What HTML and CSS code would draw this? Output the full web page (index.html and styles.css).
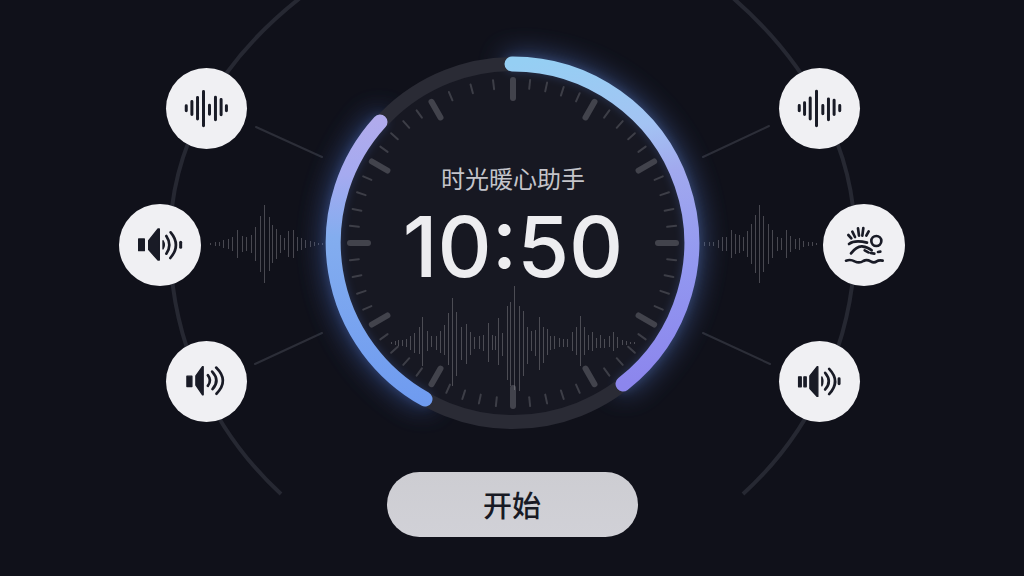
FILE: index.html
```html
<!DOCTYPE html>
<html lang="zh-CN">
<head>
    <meta charset="UTF-8">
    <meta name="viewport" content="width=device-width, initial-scale=1.0">
    <title>时光暖心助手</title>
    <link rel="stylesheet" href="styles.css">
</head>
<body>
    <main class="app">
        <!-- Orbit, spokes and side waves -->
        <svg class="backdrop" viewBox="0 0 1024 576" aria-hidden="true">
            <g class="orbit">
                <path d="M281 494A343 343 0 0 1 170 240C170 150 215 65 300 -2"/>
                <path d="M743 494A343 343 0 0 0 855 240C855 150 810 65 733 -2"/>
            </g>
            <g class="spokes">
                <path d="M256 127L322 157M255 364L322 333M769 126L703 157M770 364L703 333"/>
            </g>
            <g class="wave" id="wave-left"></g>
            <g class="wave" id="wave-right"></g>
        </svg>

        <div class="stage">
            <!-- Left sounds -->
            <div class="side side-left">
                <button class="sound" aria-label="声波">
                    <svg viewBox="-122 -122 244 244">
                        <path class="bars" d="M-61 -8V7M-44 -21V18M-27 -33V32M-9 -51V52M9 -10V17M27 -34V34M44 -27V19M60 -8V7"/>
                    </svg>
                </button>
                <button class="sound sound-outer" aria-label="音量">
                    <svg viewBox="-123 -123 246 246">
                        <path class="solid" d="M-64 -18H-47V17H-64ZM-34 -13L-6 -48H-2V45H-6L-34 14Z"/>
                        <path class="solid" d="M9 -13Q17 0 9 12Z"/>
                        <path class="line" d="M19 -27Q37 0 19 26M32 -38Q64 0 31 39"/>
                        <path class="bars" d="M62 -8V7"/>
                    </svg>
                </button>
                <button class="sound" aria-label="音量">
                    <svg viewBox="-122 -122 244 244">
                        <path class="solid" d="M-59 -16H-44V15H-59ZM-32 -17L-12 -45H-10V40H-12L-32 11Z"/>
                        <path class="line" d="M4 -19Q17 -3 4 13M17 -30Q42 -3 18 23M29 -42Q69 -3 30 37"/>
                    </svg>
                </button>
            </div>

            <!-- Dial -->
            <section class="dial">
                <svg class="dial-face" viewBox="-187 -187 374 374" aria-hidden="true">
                    <defs>
                        <linearGradient id="arc-right" gradientUnits="userSpaceOnUse" x1="0" y1="-180" x2="60" y2="150">
                            <stop offset="0" stop-color="#95cff3"/>
                            <stop offset="0.25" stop-color="#a3c3f3"/>
                            <stop offset="0.4" stop-color="#a1a9ee"/>
                            <stop offset="0.7" stop-color="#9297f0"/>
                            <stop offset="1" stop-color="#8c86ed"/>
                        </linearGradient>
                        <linearGradient id="arc-left" gradientUnits="userSpaceOnUse" x1="0" y1="-125" x2="0" y2="160">
                            <stop offset="0" stop-color="#b1abec"/>
                            <stop offset="0.2" stop-color="#a5aaf0"/>
                            <stop offset="0.42" stop-color="#83adef"/>
                            <stop offset="1" stop-color="#6f9bf0"/>
                        </linearGradient>
                        <filter id="glow" x="-30%" y="-30%" width="160%" height="160%">
                            <feGaussianBlur stdDeviation="14"/>
                        </filter>
                        <filter id="rim" x="-20%" y="-20%" width="140%" height="140%">
                            <feGaussianBlur stdDeviation="5"/>
                        </filter>
                        <path id="right" d="M-1 -179A179 179 0 0 1 110 141"/>
                        <path id="left" d="M-88 156A179 179 0 0 1 -133 -121"/>
                    </defs>
                    <g class="arcs arcs-glow" filter="url(#glow)">
                        <use href="#right" stroke="#5a7fd0"/>
                        <use href="#left" stroke="#4f76d0"/>
                    </g>
                    <circle class="disc" r="174"/>
                    <g class="arcs arcs-rim" filter="url(#rim)">
                        <use href="#right" stroke="#5a7fd0"/>
                        <use href="#left" stroke="#4f76d0"/>
                    </g>
                    <circle class="track" r="179"/>
                    <g class="arcs">
                        <use href="#right" stroke="url(#arc-right)"/>
                        <use href="#left" stroke="url(#arc-left)"/>
                    </g>
                    <g id="ticks"></g>
                    <g class="wave" id="wave-center"></g>
                </svg>
                <div class="dial-text">
                    <h1 class="title">时光暖心助手</h1>
                    <time class="time">10:50</time>
                </div>
            </section>

            <!-- Right sounds -->
            <div class="side side-right">
                <button class="sound" aria-label="声波">
                    <svg viewBox="-122 -122 244 244">
                        <path class="bars" d="M-61 -9V7M-45 -17V18M-28 -32V32M-9 -52V52M10 -9V16M27 -29V34M44 -25V18M61 -9V7"/>
                    </svg>
                </button>
                <button class="sound sound-outer" aria-label="海浪">
                    <svg viewBox="-123 -123 246 246">
                        <path class="line" d="M-47 -30L-38 -20M-35 -40L-27 -24M-18 -50L-15 -28M-2 -51L-5 -28M14 -41L7 -28"/>
                        <path class="line" d="M-45 -3Q-28 -16 9 -7M-39 25Q-22 3 -6 4Q12 6 23 16"/>
                        <circle class="line" cx="37" cy="-12" r="15"/>
                        <path class="line" d="M2 16L13 22M20 24L31 26M42 21L49 20"/>
                        <path class="line" d="M-54 47Q-40 42 -28 49Q-14 56 -2 48Q8 42 20 49Q30 55 38 49Q44 45 56 47"/>
                    </svg>
                </button>
                <button class="sound" aria-label="音量">
                    <svg viewBox="-122 -122 244 244">
                        <path class="solid" d="M-63 -14H-55V16H-63ZM-47 -14H-40V16H-47ZM-29 -17L-7 -45H-5V45H-7L-29 21Z"/>
                        <path class="solid" d="M7 -14Q14 0 7 13Z"/>
                        <path class="line" d="M17 -26Q39 0 17 24M29 -38Q65 0 29 38"/>
                        <path class="bars" d="M59 -8V7"/>
                    </svg>
                </button>
            </div>
        </div>

        <button class="start">开始</button>
    </main>
    <script src="script.js"></script>
</body>
</html>
```
FILE: styles.css
```css
body {
    margin: 0;
    background-color: #10111a;
    font-family: "Noto Sans CJK SC", sans-serif;
}
button {
    border: none;
    padding: 0;
    cursor: pointer;
}
.app {
    position: relative;
    box-sizing: border-box;
    min-height: 100vh;
    padding: 56px 0 32px;
    display: flex;
    flex-direction: column;
    align-items: center;
    gap: 42px;
    overflow: hidden;
}

/* Backdrop drawing, centred behind the dial */
.backdrop {
    position: absolute;
    top: 0;
    left: 50%;
    width: 1024px;
    transform: translateX(-50%);
}
.orbit {
    fill: none;
    stroke: #262832;
    stroke-width: 4;
}
.spokes {
    stroke: #2c2e38;
    stroke-width: 2;
    stroke-linecap: round;
}
.wave {
    stroke: #96969a;
    stroke-width: 1;
    stroke-opacity: 0.42;
}

.stage {
    position: relative;
    display: flex;
    align-items: center;
    gap: 79px;
}
.side {
    padding-top: 3px;
    display: flex;
    flex-direction: column;
    gap: 55px;
}
.side-left {
    width: 128px;
    align-items: flex-end;
}
.side-right {
    width: 126px;
    align-items: flex-start;
}
.sound {
    width: 81px;
    height: 81px;
    border-radius: 50%;
    background-color: #f0f0f3;
    color: #191b26;
}
.sound:hover {
    background-color: #fff;
}
.sound svg {
    display: block;
    width: 100%;
}
.sound-outer {
    width: 82px;
    height: 82px;
}
.side-left .sound-outer {
    align-self: flex-start;
}
.side-right .sound-outer {
    align-self: flex-end;
}
.bars {
    fill: none;
    stroke: currentColor;
    stroke-width: 9;
    stroke-linecap: round;
}
.line {
    fill: none;
    stroke: currentColor;
    stroke-width: 8;
    stroke-linecap: round;
}
.solid {
    fill: currentColor;
    stroke: currentColor;
    stroke-width: 4;
    stroke-linejoin: round;
}

/* Dial */
.dial {
    display: grid;
    width: 374px;
}
.dial-face,
.dial-text {
    grid-area: 1 / 1;
}
.dial-face {
    width: 100%;
    overflow: visible;
}
.disc {
    fill: #171822;
}
.track {
    fill: none;
    stroke: #2a2b35;
    stroke-width: 14;
}
.arcs {
    fill: none;
    stroke-width: 15;
    stroke-linecap: round;
}
.arcs-glow {
    opacity: 0.7;
}
.arcs-rim {
    opacity: 0.3;
}
.tick {
    stroke: #3d3e47;
    stroke-width: 2;
    stroke-linecap: round;
}
.tick-major {
    stroke: #42434c;
    stroke-width: 6;
}
.dial-text {
    position: relative;
    padding-top: 104px;
    text-align: center;
}
.title {
    margin: 0;
    font-size: 24px;
    line-height: 36px;
    font-weight: 400;
    color: #c4c4ca;
}
.time {
    display: block;
    font-family: Inter, "Liberation Sans", sans-serif;
    font-size: 84px;
    font-weight: 500;
    line-height: 102px;
    color: #ededf0;
}

.start {
    position: relative;
    width: 251px;
    height: 65px;
    padding-bottom: 2px;
    border-radius: 33px;
    background: linear-gradient(#cdcdd2, #d1d1d7);
    color: #181a24;
    font-family: inherit;
    font-size: 29px;
    font-weight: 500;
}
.start:hover {
    background: #dedee3;
}
```
FILE: script.js
```js
const SVG_NS = 'http://www.w3.org/2000/svg';

function addLine(parent, x1, y1, x2, y2, className) {
    const line = document.createElementNS(SVG_NS, 'line');
    line.setAttribute('x1', x1);
    line.setAttribute('y1', y1);
    line.setAttribute('x2', x2);
    line.setAttribute('y2', y2);
    if (className) line.setAttribute('class', className);
    parent.appendChild(line);
    return line;
}

// Dial ticks: a long one every 30 degrees, short ones between
function drawTicks() {
    const ticks = document.getElementById('ticks');
    for (let hour = 0; hour < 12; hour++) {
        const major = addLine(ticks, 0, -163, 0, -145, 'tick tick-major');
        major.setAttribute('transform', `rotate(${hour * 30})`);
        const steps = hour === 11 ? [7, 15, 23] : [6, 12, 18, 24];
        for (const step of steps) {
            const minor = addLine(ticks, 0, -164, 0, -155, 'tick');
            minor.setAttribute('transform', `rotate(${hour * 30 + step})`);
        }
    }
}

// Bars are [x, height above the axis, height below the axis]
function drawWave(id, axis, bars) {
    const wave = document.getElementById(id);
    for (const [x, up, down = up] of bars) {
        addLine(wave, x + 0.5, axis - up, x + 0.5, axis + down);
    }
}

drawTicks();

drawWave('wave-left', 244, [
    [210, 1], [215, 2], [219, 2], [223, 4], [228, 5], [232, 7], [237, 14],
    [242, 8], [246, 7], [251, 9], [255, 17], [260, 28], [264, 39], [269, 27],
    [272, 19], [276, 15], [280, 9], [284, 6], [288, 13], [293, 14], [297, 7],
    [301, 6], [305, 4], [310, 3], [314, 2], [318, 1], [322, 1]
]);

drawWave('wave-right', 244, [
    [704, 2], [709, 2], [713, 2], [718, 4], [722, 7], [726, 7], [731, 14],
    [735, 10], [739, 9], [743, 7], [747, 13], [751, 20], [755, 29], [759, 39],
    [763, 28], [768, 20], [772, 14], [777, 7], [781, 6], [786, 14], [790, 8],
    [795, 5], [799, 6], [803, 3], [808, 2], [812, 2], [816, 1]
]);

drawWave('wave-center', 100, [
    [-122, 1], [-118, 2], [-115, 3], [-111, 3], [-107, 4], [-103, 7], [-99, 10], [-94, 16, 11],
    [-91, 26, 23], [-86, 12, 8], [-82, 7, 4], [-77, 7], [-73, 12, 10],
    [-69, 18, 12], [-65, 30, 22], [-61, 45, 43], [-57, 31, 33], [-52, 16, 17],
    [-47, 19, 21], [-43, 11, 12], [-39, 6], [-34, 7, 6], [-30, 8], [-25, 20, 19],
    [-21, 8, 7], [-18, 7], [-15, 25, 22], [-11, 10, 13], [-6, 37, 37],
    [-3, 41, 43], [1, 57, 47], [6, 37, 48], [10, 32, 33], [14, 16, 21],
    [18, 12, 8], [22, 13], [26, 26, 27], [30, 16, 20], [34, 14, 12], [37, 7],
    [41, 7, 6], [46, 5, 4], [50, 4], [54, 4], [59, 11, 8], [63, 16, 12],
    [67, 27, 23], [71, 16, 12], [75, 8, 7], [79, 11, 8], [83, 5], [87, 8, 5],
    [91, 4, 5], [96, 7, 4], [100, 11, 8], [104, 6, 5], [109, 3, 2], [113, 2],
    [117, 1], [121, 1]
]);
```
